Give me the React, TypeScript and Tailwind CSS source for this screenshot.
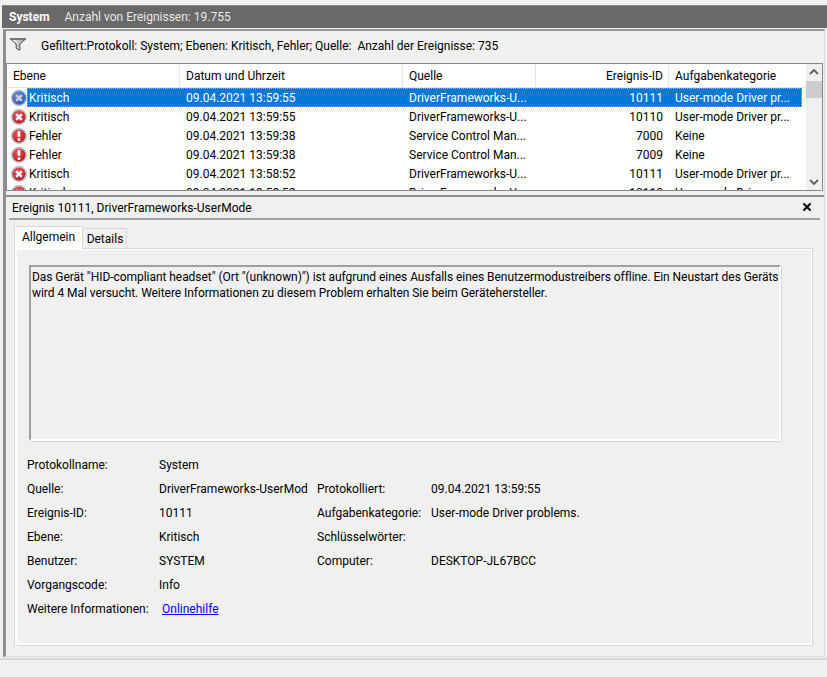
import { X } from 'lucide-react'

const headerColumns = "grid grid-cols-[173px_223px_133px_133px_133px]"
const rowColumns = "grid grid-cols-[153px_223px_133px_133px_133px]"

const rows = [
  { level: "Kritisch", icon: "critical", date: "09.04.2021 13:59:55", source: "DriverFrameworks-U...", id: "10111", task: "User-mode Driver pr...", selected: true },
  { level: "Kritisch", icon: "critical", date: "09.04.2021 13:59:55", source: "DriverFrameworks-U...", id: "10110", task: "User-mode Driver pr..." },
  { level: "Fehler", icon: "error", date: "09.04.2021 13:59:38", source: "Service Control Man...", id: "7000", task: "Keine" },
  { level: "Fehler", icon: "error", date: "09.04.2021 13:59:38", source: "Service Control Man...", id: "7009", task: "Keine" },
  { level: "Kritisch", icon: "critical", date: "09.04.2021 13:58:52", source: "DriverFrameworks-U...", id: "10111", task: "User-mode Driver pr..." },
  { level: "Kritisch", icon: "critical", date: "09.04.2021 13:58:52", source: "DriverFrameworks-U...", id: "10110", task: "User-mode Driver pr..." },
]

function LevelIcon({ type, selected }: { type: string; selected?: boolean }) {
  const id = selected ? "level-blue" : "level-red"
  return (
    <svg width="16" height="16" viewBox="0 0 16 16" className="shrink-0">
      <defs>
        <radialGradient id={id} cx="0.4" cy="0.3" r="0.8">
          <stop offset="0" stopColor={selected ? "#6d8ccb" : "#f2545b"} />
          <stop offset="1" stopColor={selected ? "#2f4f9c" : "#b3121d"} />
        </radialGradient>
      </defs>
      <circle cx="8" cy="8" r="7.9" fill={selected ? "#8fa3cf" : "#b4b4b4"} />
      <circle cx="8" cy="8" r="6.3" fill={`url(#${id})`} />
      {type === "critical" ? (
        <path d="M5.1 5.1 10.9 10.9M10.9 5.1 5.1 10.9" stroke={selected ? "#c4cbe6" : "#fff"} strokeWidth="2.5" />
      ) : (
        <path d="M8 3V8.8M8 10.3V12.9" stroke="#fff" strokeWidth="2.6" />
      )}
    </svg>
  )
}

function EventRow({ row }: { row: (typeof rows)[number] }) {
  return (
    <div className="flex h-[19px] leading-[21px]">
      <span className="flex w-[20px] shrink-0 items-center justify-end">
        <LevelIcon type={row.icon} selected={row.selected} />
      </span>
      <div className={`${rowColumns} h-[19px] ${row.selected ? "bg-[#0078d7] text-white outline-1 -outline-offset-1 outline-dotted outline-[#f2a33c]" : ""}`}>
        <span className="pl-[2px]">{row.level}</span>
        <div className="pl-[6px]">{row.date}</div>
        <div className="pl-[6px]">{row.source}</div>
        <div className="pr-[6px] text-right">{row.id}</div>
        <div className="pl-[6px]">{row.task}</div>
      </div>
    </div>
  )
}

function Field({ label, value, link }: { label: string; value?: string; link?: boolean }) {
  return (
    <div className="flex h-[24px] items-center">
      <span className="w-[132px] shrink-0 whitespace-nowrap">{label}</span>
      {link ? <a className="ml-[3px] text-[#0000ff] underline">{value}</a> : <span className="whitespace-nowrap">{value}</span>}
    </div>
  )
}

function RightField({ label, value }: { label: string; value?: string }) {
  return (
    <div className="flex h-[24px] items-center">
      <span className="w-[114px] shrink-0 whitespace-nowrap">{label}</span>
      <span className="whitespace-nowrap">{value}</span>
    </div>
  )
}

export default function App() {
  return (
    <div className="h-[677px] w-[827px] overflow-hidden bg-[#f0f0f0] text-[12px] text-black [font-family:Roboto,sans-serif]">
      <div className="pt-[5px] pl-[2px]">
        <div className="flex h-[23px] items-center border-t border-[#8a8a8a] bg-[#696969] pl-[7px] text-white">
          <span className="font-bold">System</span>
          <span className="ml-[15px] text-[#e8e8e8]">Anzahl von Ereignissen: 19.755</span>
        </div>
      </div>

      <div className="ml-[3px] mr-[2px] mt-px flex h-[628px] flex-col border-t-2 border-r border-b border-l-[3px] border-t-[#9a9a9a] border-r-[#d9d9d9] border-b-[#d9d9d9] border-l-[#8e8e8e]">
        <div className="flex h-[32px] items-center pl-[4px]">
          <svg width="16" height="13" viewBox="0 0 16 13" className="mt-[-6px] shrink-0">
            <defs>
              <linearGradient id="funnel" x1="0" y1="0" x2="1" y2="0">
                <stop offset="0" stopColor="#fff" />
                <stop offset="1" stopColor="#9a9a9a" />
              </linearGradient>
            </defs>
            <path d="M.5 1H15.5L9.8 6.2V12.2L6.2 10.4V6.2Z" fill="url(#funnel)" stroke="#4a4a4a" />
            <path d="M0 1H16" stroke="#777" strokeWidth="2" />
          </svg>
          <span className="ml-[15px] mb-[2px] whitespace-nowrap">Gefiltert:Protokoll: System; Ebenen: Kritisch, Fehler; Quelle:&nbsp; Anzahl der Ereignisse: 735</span>
        </div>

        <div className="mr-[1px] flex h-[128px] border border-[#828790] bg-white">
          <div className="min-w-0 flex-1 overflow-hidden">
            <div className={`${headerColumns} h-[24px] items-center border-b border-[#e5e5e5]`}>
              <div className="flex h-full items-center border-r border-[#e5e5e5] pl-[6px]">Ebene</div>
              <div className="flex h-full items-center border-r border-[#e5e5e5] pl-[6px]">Datum und Uhrzeit</div>
              <div className="flex h-full items-center border-r border-[#e5e5e5] pl-[6px]">Quelle</div>
              <div className="flex h-full items-center justify-end border-r border-[#e5e5e5] pr-[5px]">Ereignis-ID</div>
              <div className="flex h-full items-center pl-[6px]">Aufgabenkategorie</div>
            </div>
            {rows.map((row, i) => (
              <EventRow key={i} row={row} />
            ))}
          </div>
          <div className="flex w-[16px] shrink-0 flex-col items-center bg-[#f0f0f0]">
            <svg width="16" height="17" viewBox="0 0 16 17"><path d="M4 10 8 6 12 10" fill="none" stroke="#606060" strokeWidth="1.8" /></svg>
            <div className="h-[17px] w-[16px] bg-[#cdcdcd]" />
            <div className="flex-1" />
            <svg width="16" height="17" viewBox="0 0 16 17"><path d="M4 7 8 11 12 7" fill="none" stroke="#606060" strokeWidth="1.8" /></svg>
          </div>
        </div>

        <div className="mt-[4px] flex-1 border-t-2 border-[#8e8e8e] pl-[3px] pr-[4px]">
          <div className="box-content flex h-[20px] items-end justify-between border-b-2 border-[#a0a0a0] pb-px pl-[3px] pr-[4px]">
            <span className="leading-[18px]">Ereignis 10111, DriverFrameworks-UserMode</span>
            <X size={12} strokeWidth={4} className="mb-[4px] mr-[3px] text-black" />
          </div>

          <div className="ml-[5px] mr-[7px] mt-[6px]">
            <div className="relative z-10 flex h-[23px] items-end">
              <div className="flex h-[23px] w-[69px] items-center justify-center border border-b-0 border-[#d9d9d9] bg-white pb-[3px]">Allgemein</div>
              <div className="flex h-[21px] w-[44px] items-center justify-center border border-l-0 border-[#d9d9d9] bg-[#f0f0f0] pl-px">Details</div>
            </div>
            <div className="-mt-px h-[398px] border border-[#d9d9d9] bg-white pb-[2px] pl-[2px] pr-px pt-px">
              <div className="h-full bg-[#f0f0f0] pl-[12px] pr-[30px] pt-[15px]">
                <div className="h-[176px] border-2 border-[#a0a0a0] border-r-white border-b-white pl-px pt-[2px] leading-[16px] tracking-[-0.05px] shadow-[1px_1px_0_#d9d9d9]">
                  Das Gerät "HID-compliant headset" (Ort "(unknown)") ist aufgrund eines Ausfalls eines Benutzermodustreibers offline. Ein Neustart des Geräts wird 4 Mal versucht. Weitere Informationen zu diesem Problem erhalten Sie beim Gerätehersteller.
                </div>
                <div className="-ml-[2px] mt-[12px] flex">
                  <div className="w-[290px]">
                    <Field label="Protokollname:" value="System" />
                    <Field label="Quelle:" value="DriverFrameworks-UserMod" />
                    <Field label="Ereignis-ID:" value="10111" />
                    <Field label="Ebene:" value="Kritisch" />
                    <Field label="Benutzer:" value="SYSTEM" />
                    <Field label="Vorgangscode:" value="Info" />
                    <Field label="Weitere Informationen:" value="Onlinehilfe" link />
                  </div>
                  <div className="pt-[24px]">
                    <RightField label="Protokolliert:" value="09.04.2021 13:59:55" />
                    <RightField label="Aufgabenkategorie:" value="User-mode Driver problems." />
                    <RightField label="Schlüsselwörter:" />
                    <RightField label="Computer:" value="DESKTOP-JL67BCC" />
                  </div>
                </div>
              </div>
            </div>
          </div>
        </div>
      </div>
      <div className="mt-px h-[20px] border-t-2 border-[#d9d9d9]" />
    </div>
  )
}
